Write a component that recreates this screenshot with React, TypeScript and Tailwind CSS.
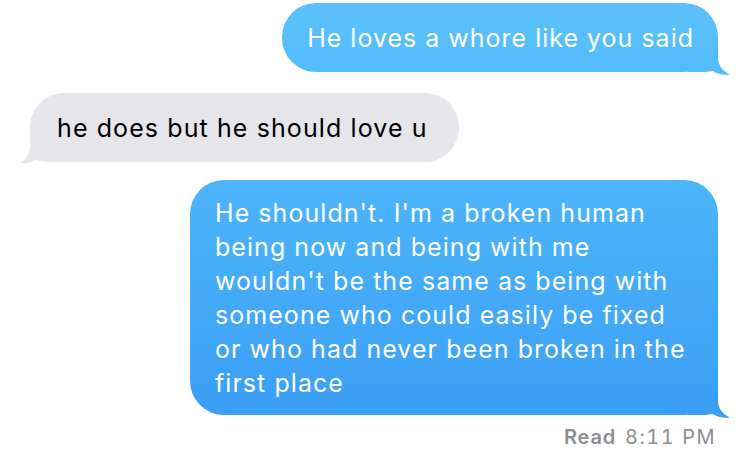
import React from "react";

function RightTail({ color }: { color: string }) {
  return (
    <svg
      className="absolute"
      style={{ right: -12, bottom: -3 }}
      width="42"
      height="38"
      viewBox="0 0 42 38"
    >
      <path
        d="M0 0 H30 V20 C30 28 34 34 42 37.5 C35 38.5 29 37 25 34 C20 35 14 35 8 35 H0 Z"
        fill={color}
      />
    </svg>
  );
}

function LeftTail({ color }: { color: string }) {
  return (
    <svg
      className="absolute"
      style={{ left: -10, bottom: -2 }}
      width="40"
      height="38"
      viewBox="0 0 40 38"
    >
      <path
        d="M40 0 H10 V20 C10 28 6 34 0 37 C6 38 11 36.5 15 34 C20 35 26 36 32 36 H40 Z"
        fill={color}
      />
    </svg>
  );
}

export default function App() {
  const font = { fontFamily: "Inter, 'Liberation Sans', sans-serif" };
  return (
    <div className="w-[750px] h-[454px] bg-white overflow-hidden flex flex-col pt-[3px]" style={font}>
      <div className="flex justify-end pr-[32px]">
        <div className="relative">
          <div className="relative z-10 rounded-[34px] bg-gradient-to-b from-[#5ac1fb] to-[#55bcfa] text-white text-[25px] leading-[34px] h-[69px] flex items-center pl-[25px] pr-[24px] tracking-[1px]">
            He loves a whore like you said
          </div>
          <RightTail color="#55bcfa" />
        </div>
      </div>

      <div className="flex justify-start pl-[30px] mt-[21px]">
        <div className="relative">
          <div className="relative z-10 rounded-[34px] bg-[#e5e5ea] text-black text-[25px] leading-[34px] h-[69px] flex items-center pl-[27px] pr-[31px] tracking-[1.1px]">
            he does but he should love u
          </div>
          <LeftTail color="#e5e5ea" />
        </div>
      </div>

      <div className="flex justify-end pr-[32px] mt-[18px]">
        <div className="relative">
          <div className="relative z-10 w-[528px] rounded-[34px] bg-gradient-to-b from-[#4db5fa] to-[#3b9ff6] text-white text-[25px] leading-[34px] pt-[16px] pb-[15px] px-[25px] tracking-[1.05px]">
            He shouldn't. I'm a broken human
            <br />
            being now and being with me
            <br />
            wouldn't be the same as being with
            <br />
            someone who could easily be fixed
            <br />
            or who had never been broken in the
            <br />
            first place
          </div>
          <RightTail color="#3b9ff6" />
        </div>
      </div>

      <div className="flex justify-end pr-[34px] mt-[10px] text-[20px] leading-[24px] text-[#8e8e93]">
        <span className="font-semibold tracking-[0.8px]">Read</span>
        <span className="ml-[9px] tabular-nums tracking-[1.5px]">8:11 PM</span>
      </div>
    </div>
  );
}
